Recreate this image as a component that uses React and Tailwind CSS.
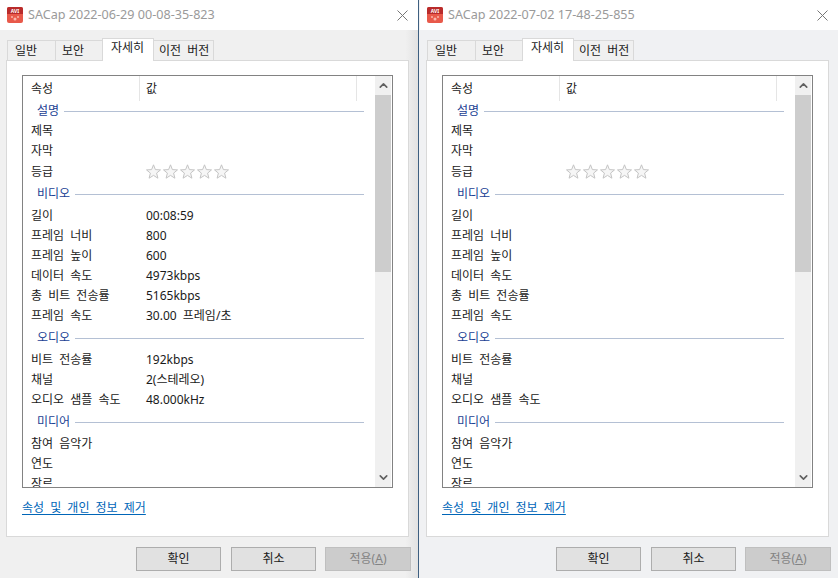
import { ChevronDown, ChevronUp } from "lucide-react";

const left = {
  title: "SACap 2022-06-29 00-08-35-823",
  len: "00:08:59",
  w: "800",
  h: "600",
  dataRate: "4973kbps",
  total: "5165kbps",
  fps: "30.00 프레임/초",
  bit: "192kbps",
  ch: "2(스테레오)",
  sample: "48.000kHz",
};

const right = { title: "SACap 2022-07-02 17-48-25-855" };

const Group = ({ label, className }) => (
  <div className={`flex items-center pl-[14px] pr-[11px] gap-[5px] ${className}`}>
    <span className="text-[#1b3f94]">{label}</span>
    <div className="flex-1 h-px bg-[#b4c0d4]" />
  </div>
);

const Row = ({ name, value, className = "h-5" }) => (
  <div className={`flex items-center pl-2 ${className}`}>
    <span className="w-[115px] shrink-0 whitespace-nowrap">{name}</span>
    <span className="whitespace-nowrap">{value}</span>
  </div>
);

const Tab = ({ label, active, className }) => (
  <div
    className={`flex items-center border border-[#d9d9d9] border-b-0 whitespace-nowrap ${
      active ? "bg-white h-[23px] mb-[-1px] z-10 pb-1" : "bg-[#f0f0f0] h-5"
    } ${className}`}
  >
    {label}
  </div>
);

const RatingStar = () => (
  <svg width="15" height="15" viewBox="0 0 15 15">
    <polygon
      points="7.5,0.8 9.4,5.6 14.5,5.9 10.6,9.1 11.9,14.2 7.5,11.4 3.1,14.2 4.4,9.1 0.5,5.9 5.6,5.6"
      fill="#f6f6f6"
      stroke="#c4c4c4"
      strokeWidth="1"
    />
  </svg>
);

const FileWindow = ({ data, className }) => (
  <div
    className={`flex flex-col w-[419px] h-[578px] shrink-0 text-[12px] text-[#1a1a1a] ${className}`}
    style={{ fontFamily: '"Noto Sans", "Noto Sans CJK KR", sans-serif', wordSpacing: "3px" }}
  >
    <div className="flex items-center h-[30px] bg-white pl-[7px] pr-[10px] gap-[5px]">
      <svg width="16" height="16" viewBox="0 0 16 16" className="shrink-0">
        <rect width="16" height="16" rx="2" fill="#e8594a" />
        <path d="M0 2a2 2 0 0 1 2-2h12a2 2 0 0 1 2 2v5H0z" fill="#b92b2b" />
        <text x="8" y="5.6" textAnchor="middle" fontSize="5" fontWeight="700" fill="#fff" style={{ wordSpacing: 0 }}>
          AVI
        </text>
        <circle cx="5" cy="10" r="1" fill="#f9b8ae" />
        <circle cx="8" cy="12" r="1.5" fill="#f9b8ae" />
        <circle cx="11" cy="10" r="1" fill="#f9b8ae" />
      </svg>
      <span className="flex-1 text-[#9a9a9a] text-[12.6px] whitespace-nowrap" style={{ wordSpacing: 0 }}>
        {data.title}
      </span>
      <svg width="11" height="11" viewBox="0 0 11 11" className="shrink-0">
        <path d="M0.5 0.5l10 10M10.5 0.5l-10 10" stroke="#777" strokeWidth="1" fill="none" />
      </svg>
    </div>

    <div className="flex items-end h-[30px] pl-[7px]">
      <Tab label="일반" className="w-[49px] pl-[7px]" />
      <Tab label="보안" className="w-[48px] -ml-px pl-[6px]" />
      <Tab label="자세히" active className="w-[52px] -ml-px pl-2" />
      <Tab label="이전 버전" className="w-[61px] -ml-px pl-[5px]" />
    </div>

    <div className="flex flex-col w-[403px] h-[477px] ml-[6px] bg-white border border-[#d9d9d9] pt-[14px] px-[15px]">
      <div className="flex h-[413px] w-[371px] border border-[#828282] overflow-hidden pr-px">
        <div className="flex-1 min-w-0 overflow-hidden">
          <div className="flex h-[25px] items-center">
            <div className="w-[117px] h-full pl-2 flex items-center border-r border-[#e5e5e5]">속성</div>
            <div className="w-[217px] h-full pl-[6px] flex items-center border-r border-[#e5e5e5]">값</div>
          </div>
          <Group label="설명" className="h-5" />
          <Row name="제목" />
          <Row name="자막" />
          <Row
            name="등급"
            className="h-[21px]"
            value={
              <span className="flex gap-[2px]">
                {[0, 1, 2, 3, 4].map((i) => (
                  <RatingStar key={i} />
                ))}
              </span>
            }
          />
          <Group label="비디오" className="h-6" />
          <Row name="길이" value={data.len} />
          <Row name="프레임 너비" value={data.w} />
          <Row name="프레임 높이" value={data.h} />
          <Row name="데이터 속도" value={data.dataRate} />
          <Row name="총 비트 전송률" value={data.total} />
          <Row name="프레임 속도" value={data.fps} />
          <Group label="오디오" className="h-6" />
          <Row name="비트 전송률" value={data.bit} />
          <Row name="채널" value={data.ch} />
          <Row name="오디오 샘플 속도" value={data.sample} />
          <Group label="미디어" className="h-6" />
          <Row name="참여 음악가" />
          <Row name="연도" />
          <Row name="장르" />
        </div>
        <div className="flex flex-col w-4 shrink-0 bg-[#f0f0f0]">
          <div className="flex items-center justify-center h-[19px] shrink-0">
            <ChevronUp size={13} strokeWidth={3} className="text-[#606060]" />
          </div>
          <div className="h-[177px] shrink-0 bg-[#cdcdcd]" />
          <div className="flex-1" />
          <div className="flex items-center justify-center h-[19px] shrink-0">
            <ChevronDown size={13} strokeWidth={3} className="text-[#606060]" />
          </div>
        </div>
      </div>
      <div className="mt-[11px] text-[#0066b8] underline underline-offset-2 whitespace-nowrap">
        속성 및 개인 정보 제거
      </div>
    </div>

    <div className="flex pl-[136px] pt-[10px] whitespace-nowrap">
      <button className="w-[85px] h-6 mr-[10px] bg-[#e1e1e1] border border-[#adadad]">확인</button>
      <button className="w-[85px] h-6 mr-[9px] bg-[#e1e1e1] border border-[#adadad]">취소</button>
      <button className="w-[86px] h-6 bg-[#cccccc] border border-[#bfbfbf] text-[#838383]">
        적용(<span className="underline">A</span>)
      </button>
    </div>
  </div>
);

export default function App() {
  return (
    <div className="flex w-[838px] h-[578px] overflow-hidden bg-[#f0f0f0]">
      <FileWindow
        data={left}
        className="border-r border-[#3e5f80] bg-[linear-gradient(90deg,#f0f0f0_97%,#e2e2e2_100%)]"
      />
      <FileWindow data={right} className="pl-px bg-[#f0f1f3]" />
    </div>
  );
}
